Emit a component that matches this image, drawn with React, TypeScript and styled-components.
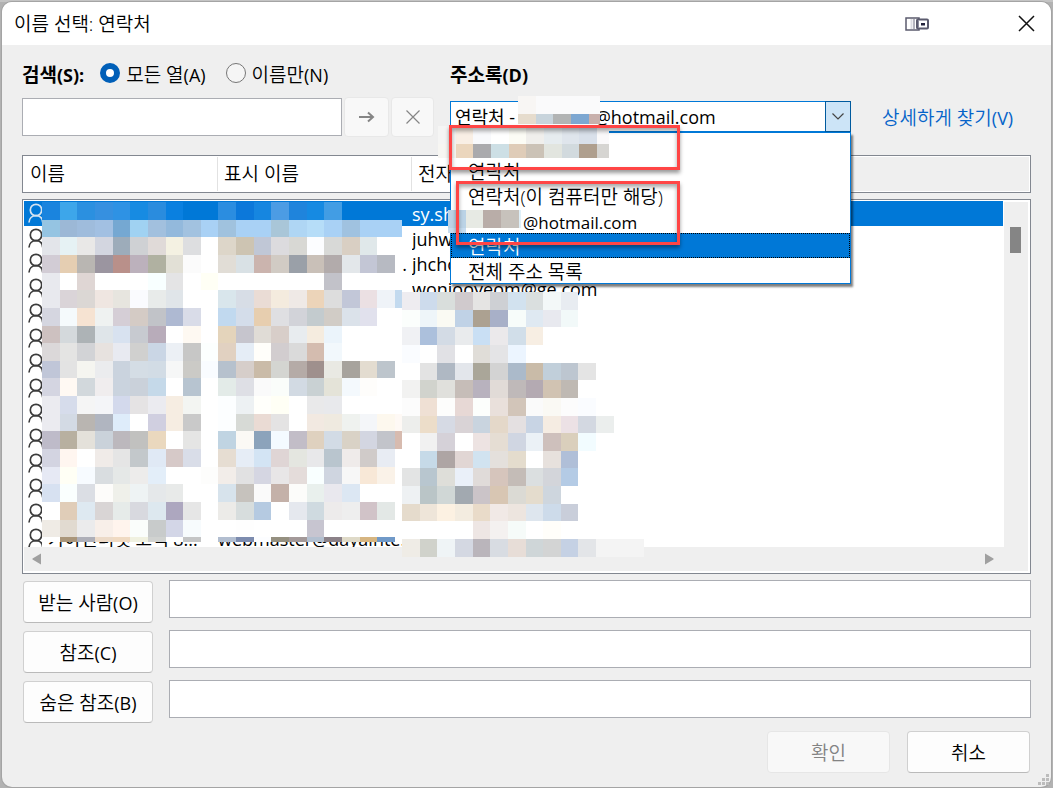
import React from 'react';
import styled, { createGlobalStyle } from 'styled-components';

const GlobalStyle = createGlobalStyle`
  *, *::before, *::after { box-sizing: border-box; }
  body {
    margin: 0;
    background: #b4b4b4;
    font-family: 'Open Sans', 'Noto Sans CJK KR', sans-serif;
    font-size: 19px;
    font-weight: 350;
    color: #000;
  }
  button, input, select { font: inherit; color: inherit; margin: 0; }
`;

const Desktop = styled.div`
  min-height: 100vh;
  padding: 2px 2px 1px;
  display: flex;
  background: linear-gradient(#c4c4c4 0 2px, #b2b2b2 2px);
`;

const Dialog = styled.main`
  flex: 1;
  display: flex;
  flex-direction: column;
  background: #efefef;
  border-radius: 10px;
  box-shadow: 0 0 0 1px #a4a4a4;
`;

const TitleBar = styled.header`
  height: 43px;
  flex: none;
  display: flex;
  align-items: center;
  padding: 0 16px 0 12px;
  background: #fff;
  border-radius: 10px 10px 0 0;
`;

const Title = styled.h1`
  flex: 1;
  margin: 0;
  font-size: 19px;
  font-weight: 350;
  line-height: 26px;
`;

const IconButton = styled.button`
  display: flex;
  padding: 0;
  border: 0;
  background: none;
`;

const DeviceIcon = styled.svg`
  margin-right: 88px;
`;

const Body = styled.div`
  flex: 1;
  display: flex;
  flex-direction: column;
  padding: 14px 20px 14px;
`;

const TopArea = styled.div`
  display: flex;
  gap: 16px;
  margin-bottom: 18px;
`;

const SearchColumn = styled.fieldset`
  width: 412px;
  margin: 0;
  padding: 0;
  border: 0;
`;

const AddressColumn = styled.div`
  flex: 1;
`;

const LabelLine = styled.div`
  display: flex;
  align-items: center;
  height: 30px;
  margin-bottom: 8px;
`;

const Key = styled.span`
  font-size: 18px;
  font-weight: 400;
`;

const Strong = styled.label`
  font-weight: 700;
  margin-right: 16px;
  ${Key} { font-weight: 700; }
`;

const RadioLabel = styled.label`
  display: flex;
  align-items: center;
  gap: 6px;
  margin-right: 20px;
`;

const Radio = styled.input`
  appearance: none;
  width: 20px;
  height: 20px;
  border: 1px solid #767676;
  border-radius: 50%;
  background: #f5f5f5;
  margin-bottom: 2px;
  &:checked {
    border: 6px solid #005fb8;
    background: #fff;
  }
`;

const ControlLine = styled.div`
  display: flex;
  align-items: center;
  height: 40px;
`;

const TextBox = styled.input`
  height: 38px;
  min-width: 0;
  flex: 1;
  border: 1px solid #abadb3;
  border-radius: 0;
  background: #fff;
  padding: 0 6px;
  outline: 0;
`;

const SquareButton = styled.button<{ $width: number }>`
  width: ${(p) => p.$width}px;
  height: 40px;
  margin-left: 2px;
  display: flex;
  align-items: center;
  justify-content: center;
  padding: 0;
  border: 1px solid #e8e8e8;
  border-radius: 4px;
  background: #f8f8f8;
`;

const ComboWrap = styled.div`
  position: relative;
  z-index: 5;
  width: 401px;
  height: 32px;
`;

const Combo = styled.select`
  display: block;
  appearance: none;
  width: 100%;
  height: 31px;
  padding: 0 0 0 4px;
  border: 1px solid #0078d7;
  border-radius: 0;
  background: #fff;
  font-size: 18px;
  font-weight: 400;
  outline: 0;
`;

const ComboArrow = styled.span`
  position: absolute;
  top: 0;
  right: 0;
  width: 26px;
  height: 31px;
  display: flex;
  align-items: center;
  justify-content: center;
  background: #cce4f7;
  border: 1px solid #005a9e;
  pointer-events: none;
`;

const DropList = styled.ul`
  position: absolute;
  top: 31px;
  left: 0;
  width: 100%;
  margin: 0;
  padding: 0;
  list-style: none;
  background: #fff;
  border: 1px solid #0078d7;
  box-shadow: 2px 3px 2px rgba(0, 0, 0, 0.5);
`;

const DropItem = styled.li<{ $account?: boolean; $active?: boolean }>`
  height: 25px;
  line-height: 25px;
  padding-top: 2px;
  padding-left: ${(p) => (p.$account ? 72 : 17)}px;
  font-size: ${(p) => (p.$account ? 17 : 19)}px;
  font-weight: ${(p) => (p.$account ? 400 : 350)};
  color: ${(p) => (p.$active ? '#fff' : '#000')};
  background: ${(p) => (p.$active ? '#0078d7' : 'transparent')};
  outline: ${(p) => (p.$active ? '1px dotted #000' : 'none')};
  outline-offset: -1px;
`;

const Highlight = styled.div<{ $x: number; $y: number; $w: number; $h: number }>`
  position: absolute;
  left: ${(p) => p.$x}px;
  top: ${(p) => p.$y}px;
  width: ${(p) => p.$w}px;
  height: ${(p) => p.$h}px;
  border: 3px solid #ff4545;
  box-shadow: 0 3px 4px rgba(0, 0, 0, 0.4), inset 0 3px 4px rgba(0, 0, 0, 0.35);
  pointer-events: none;
`;

const MosaicSvg = styled.svg<{ $x: number; $y: number }>`
  position: absolute;
  left: ${(p) => p.$x}px;
  top: ${(p) => p.$y}px;
  pointer-events: none;
`;

const FindLink = styled.a`
  margin-left: 31px;
  color: #0563c9;
  text-decoration: none;
`;

const HeaderBox = styled.div`
  height: 38px;
  flex: none;
  padding: 1px;
  border: 1px solid #828790;
  background: #fff;
  margin-bottom: 6px;
`;

const Table = styled.table`
  width: 100%;
  table-layout: fixed;
  border-collapse: separate;
  border-spacing: 0;
`;

const HeadCell = styled.th<{ $width?: number }>`
  width: ${(p) => (p.$width ? `${p.$width}px` : 'auto')};
  height: 34px;
  padding: 0 6px;
  text-align: left;
  font-weight: 350;
  line-height: 26px;
  background: ${(p) => (p.$width ? '#fff' : '#efefef')};
  border-right: ${(p) => (p.$width ? '1px solid #e2e2e2' : '0')};
`;

const ListBox = styled.div`
  position: relative;
  flex: 1 1 0;
  min-height: 240px;
  display: grid;
  grid-template-columns: 1fr 25px;
  grid-template-rows: minmax(0, 1fr) 24px;
  padding: 1px 2px 2px 1px;
  border: 1px solid #828790;
  background: #fff;
`;

const Viewport = styled.div`
  overflow: hidden;
  height: 0;
  min-height: 100%;
  background: #fff;
`;

const Row = styled.tr<{ $selected: boolean }>`
  height: 25px;
  color: ${(p) => (p.$selected ? '#fff' : '#000')};
  background: ${(p) => (p.$selected ? '#0078d7' : '#fff')};
`;

const Cell = styled.td<{ $width?: number; $end?: boolean }>`
  width: ${(p) => (p.$width ? `${p.$width}px` : 'auto')};
  height: 25px;
  padding: 2px ${(p) => (p.$end ? 5 : 0)}px 0 0;
  font-size: 18px;
  font-weight: 400;
  line-height: 23px;
  white-space: nowrap;
  overflow: hidden;
  text-align: ${(p) => (p.$end ? 'right' : 'left')};
`;

const PersonSvg = styled.svg`
  display: block;
`;

const VScroll = styled.div`
  margin: 1px 0 0 1px;
  padding: 25px 6px 0;
  background: #efefef;
`;

const Thumb = styled.div`
  width: 11px;
  height: 26px;
  background: #858585;
`;

const HScroll = styled.div`
  grid-column: 1 / -1;
  display: flex;
  align-items: center;
  justify-content: space-between;
  padding: 0 34px 0 8px;
  background: #efefef;
`;

const Recipients = styled.div`
  display: flex;
  flex-direction: column;
  gap: 7px;
  margin: 6px 0 8px;
`;

const RecipientRow = styled.div`
  display: flex;
  align-items: flex-start;
  height: 43px;
  gap: 16px;
`;

const PushButton = styled.button<{ $width: number }>`
  width: ${(p) => p.$width}px;
  height: 42px;
  padding: 0;
  border: 1px solid #d0d0d0;
  border-bottom-color: #bababa;
  border-radius: 4px;
  background: #fdfdfd;
  &:disabled {
    color: #838383;
    background: #f8f8f8;
    border-color: #e6e6e6;
  }
`;

const RecipientButton = styled(PushButton)`
  margin: 1px 0 0 1px;
`;

const Footer = styled.footer`
  display: flex;
  justify-content: flex-end;
  gap: 17px;
  padding-right: 1px;
`;

const Grip = styled.svg`
  position: fixed;
  right: 4px;
  bottom: 3px;
`;

const PITCH = 17.645;
const step = (i: number) => Math.round(i * PITCH);

function Mosaic({ rows, x, y, width, height }: { rows: string[]; x: number; y: number; width: number; height: number }) {
  return (
    <MosaicSvg $x={x} $y={y} width={width} height={height} shapeRendering="crispEdges" aria-hidden="true">
      {rows.flatMap((row, r) =>
        row.split(' ').map((c, i) => (
          <rect
            key={`${r}-${i}`}
            x={step(i)}
            y={step(r)}
            width={step(i + 1) - step(i)}
            height={step(r + 1) - step(r)}
            fill={`#${c}`}
          />
        )),
      )}
    </MosaicSvg>
  );
}

const NAME_MOSAIC = [
  '1a84de 3da6ea 2b90e0 3690e0 2e92e4 178be2 2a8cde 0a80e0 0078d7 0078d7 2b8de0 0c78da 1686e0 4c9ce4 1f84dc 168ae2 429de4 0078d7 0078d7 0078d7 0078d7',
  '95c4e2 9cb8d6 9fbcdc a2c0e2 75a8d2 a0d2f2 a2c0de 93b9dc a2c2e0 a9d1f5 a0c2de a9d1f5 a9d1f5 a9c6d8 afd6f4 b6ddf8 a9d1f5 a0c2e0 a9d1f5 a9d1f5 a9d1f5',
  'e3e5ea e6f2f4 e9e8e7 d3d6e0 9dacba cfd1d4 e0dad8 f4f1e2 dddee0 fff ddd6c9 cdc4b2 c0c7d6 dcdbde d8d8d4 fcfdff d8d9d7 d9cfc3 e0e8ea fff fff',
  'd2ccd5 e5ceb2 b9b6b2 9b95a0 b9908a bcb1bc b0b1a1 e2e0d6 fbfbfb fff e1ddd6 d9e1e5 cbb4ae d1cbc4 9aa0a8 c9c0b8 b2abab e3e7ea c3c6d5 b7bac2 fff',
  'e8e9ee fff dfd6d4 fff fff fff f8ffff e4e4e5 fff fffff5 fff fff fff fff fff fff c2c2c9 fff fff fff fff',
  'e8e9ee dad4d8 dbd7d4 efe6e1 e7e5df fafbfe e8ebea e0e5e9 fff fff d9e6ec d7dde6 eadcd5 f4ebde efe9e6 ecd4b9 dddddd c2c7d8 ebe0e3 eff3f8 c3daef',
  'd5d6e0 f5fafc f6e3d2 eff2f1 d5ced6 d4cbc5 c1c3c8 aeb9d2 d9dce8 fff c1d9ef d4ddea e7ceaf dfdfe2 d2d3d9 c3cbce d1ccc6 dbe2ea e1e1ed fff fff',
  'cdc1c0 d4d9dc adb3b6 dfe5e9 d8e2f0 c7cad0 b8acba fff fef9f2 fff e4d4bb c6c5cd e0dcd6 d8cec9 e8ecef f5ecdf ebf4fb fff fff fff fff',
  'dbd8d9 e4e4e3 d2d3d6 e7e2df e8eaf1 d0d0cf cad6e5 ecf0f5 c7c7c6 fcfffe e1d1c1 e5edf6 fffefa d2cdcf dadada d4bcaf f2f8fc fff fff fff fff',
  'c0c6d8 e3e3e3 f5f5f0 ebecee cad3de d4dde5 d2dce5 f6f7f7 cbcac6 f9fcff b6c1cd d6ceca cabba8 d4d5d1 b5aba7 9f908d e9e9e3 a7a39d e3dcd0 bdc5cc fff',
  'd4d5e1 fff9f3 d2d8dc f0edee cad3de cad1da c5d9e9 fff b7c4d0 fff e3ebe8 dedfe5 fafafa fafdfa d2dae3 c9d1d3 e4e3d8 f4f9fd fefdfb fff fff',
  'ebebf0 d6dceb f5f5f5 f4f5f8 d3d9ec e5e3e4 ebebf0 f6ede2 f3f5f2 fff fcfeff edf1f3 fffffb fffff5 fff e9e9ea e8e9ec fff fff fff fff',
  'ebebf0 d3dae4 b9b5b1 b0b5c0 deecfa fff d0cfe0 f6ede2 c9c9c9 fff fcfeff d7dad6 eadbd4 e4e3e3 fff f2e9e1 efeae0 eff2ef f4f6f9 fdf8ee fef9f5',
  'bebbc9 b8b0a0 e4e1da cad2da bcb8bd c1c1bf ead8be fff e5e5e4 fff c0d4e2 fbf9f5 8ca3bb f4faff c2bdc7 dfd1bf d2dbe5 d9d2c6 d3d6e1 c2c4ca d7bbaf',
  'd3d4e1 fff6f0 fff f0ebe8 e5e5e5 c3c8cb e0e9f5 d6c9c8 d9dde8 fff e6ddd2 e6edf6 d3e4f4 dfd5d5 e4e6e0 e8e8ea b9c5ce efebea d0cbc9 e8ecf3 fff',
  'e6e9f4 fffff5 f7fbff d9dde0 e5e8e7 edeceb e3eef9 fff fff fdfdfc f2ede9 e1e1e2 d5d6e2 e8e6e7 e4dcda f9ffff cfd5e0 f7f7f7 f8e8d7 faf2e8 fff',
  'd7e1f1 fafffe dbdee4 fdfcfa eff0ea eef3f4 e5e8ea e8eae9 fff fff d7e3ec c6c2bd fafafa c4b1a9 fcfcfa e9f0ed e9e8ee dce7f3 fff fff fff',
  'fff e0cdb8 dee9f1 d9d5d5 e6ebe9 d8d9df dde8ef ada7bf e6e6e6 fff ecebe8 d7dddd b5cae1 fff e5e8ee cfdae0 edebeb eeeeee d1c3c8 e3e8e6 fff',
  'efebe5 e1dad0 ebebec f8efe9 fff4ed fafdfb c8cbcb d3d6e7 f7fbfd fff fff fefefe fff fff fff c7c5d0 fff fff fff fff fff',
  'fff aa967a aeafb8 ecdac8 f0dac2 f0f1e0 d0d2d0 fff c4c5c6 fff b2bed0 7c8bae fcfdff 959080 a39999 b3c0d0 8b8188 dfdac8 d6b581 7099c8 fff',
];

const MAIL_MOSAIC = [
  'eeecf0 cddbec d9dedc d0cacd e5e4e3 ced0d4 d2e2ef dadfdf f3f8f8 e8ecf1',
  'fbfefc eef5f9 fafaf3 c0d2e6 aca191 a8b0c8 f7fcfa dfe9f2 e8e9ef f2f9f9',
  'f0f1f4 acc0dc d3dbe5 e9ebed c9dff4 ebe9eb d1dee9 f7eee3',
  'fafcff fff e1e1e5 fff e0ddd8 e4e4e6 ecf5ff',
  'fff e3e3e3 afb8c3 e3e6eb aaa699 d3d3d3 abbaca c9bba8 c1cfda bdc6d0 e4e4e4',
  'f2f2f1 d1d3cd e0e0dc c6bdb8 b8b2be e1dbd7 bfb9b9 b4aab2 d1c3b2 bfb9b3',
  'fcfcfc efe0d4 fdfdfc e7d8d5 fcfefc e9e0db d2c5b9 fafafa faf9f4 fcfcfc fafcff',
  'edeeec ecddc9 d6dae4 d9d3d6 c9d4df e4d8c9 e4e0e1 c8d4e4 f5ece2 ece1e5 d3d8e1 ebeeed',
  'fff f1f1f1 d5d1d8 fff ede3e2 e5ddd3 d0d6e2 ebf1f6 cec0bc dacfbc f2fcff',
  'fff c6dae8 aea5a4 e1d6d4 d1e3f0 e4e0dc e4dccd fff e7e1dd b0bfd8',
  'e3e4e4 b8c6cf deded9 eaf0f9 e0dbd9 d6c5bc c4bcb7 dbdfe0 d3d5da b4cbe5',
  'eef1f3 bac5c7 d0d7d6 a2a9b0 cbc4c8 d8c6b3 dbdad4 e4dccd ced6de',
  'e5dbcc eee5d9 fcf1e2 f3ece0 e9dbc9 f1e9e6 ede5df dee6ee cddbea c9ceda',
  'fff fff fff fff eee6e4 f4f1f0 f6fbf9 fff fffefa',
  'efece6 d0d2cb eff4f6 d4d8e2 bab5bb d8dce2 e7ddd7 cfd6d8 d3d4d4 c5d1e4 e3e5e8 f4f4f4 f4f4f4 f4f4f4',
];

const COMBO_MOSAIC = [
  'f8f6f4 fafafb fafafb fafafb fafafb',
  'e6dccd c8d4dc b2b4b4 7da7d1 c8b0ac',
];

const ACCOUNT_MOSAIC = [
  'f5f5f4 f9efe5 f8f9fc fff fcfcf5 f0efec e6ecef dfe5ec d9e0ea faf9fa',
  'f7f6f2 ebd6bd aaaaad cddfe5 dfccb8 cbc2b6 e2e5df d2dade af9f8e d6d5d2',
];

const HOTMAIL_MOSAIC = ['bbd3e6 e7eae4 b9ada8 c7c2bc dff0f9', 'c6dcf0'];

type Contact = { name?: string; display?: string; mail?: string };

const CONTACTS: Contact[] = [
  { mail: 'sy.sh' },
  { mail: 'juhwa' },
  { display: '...', mail: 'jhcho' },
  { mail: 'wonjooyeom@ge.com' },
  ...Array.from({ length: 9 }, () => ({})),
  { name: '가야인터넷 고객 8...', display: 'webmaster@dayainte...' },
];

const RECIPIENTS = [
  { id: 'to', text: '받는 사람', key: '(O)' },
  { id: 'cc', text: '참조', key: '(C)' },
  { id: 'bcc', text: '숨은 참조', key: '(B)' },
];

function Person({ selected }: { selected: boolean }) {
  return (
    <PersonSvg width="18" height="23" viewBox="0 0 18 23" fill="none" stroke={selected ? '#d3e2f0' : '#3c3c3c'} strokeWidth="1.700">
      <circle cx="12" cy="7" r="5.700" />
      <path d="M5 19.500C5.200 15.500 8 12.700 12 12.700S18.500 15.500 18.700 19.500" />
    </PersonSvg>
  );
}

export default function App() {
  return (
    <>
      <GlobalStyle />
      <Desktop>
        <Dialog>
          <TitleBar>
            <Title>이름 선택: 연락처</Title>
            <DeviceIcon width="26" height="16" viewBox="0 0 26 16" fill="none" aria-hidden="true">
              <rect x="2" y="2" width="13" height="12" fill="#fff" stroke="#5b5b6e" strokeWidth="1.500" />
              <path d="M7.500 3v10" stroke="#dcdce2" strokeWidth="2" />
              <path d="M10 3v10" stroke="#b4b4be" strokeWidth="2" />
              <rect x="13" y="3.500" width="11" height="9" rx="1" fill="#fff" stroke="#5b5b6e" strokeWidth="2" />
              <path d="M14.500 4v8" stroke="#8b8b9c" />
              <rect x="17" y="7" width="4" height="2.500" fill="#23233c" />
            </DeviceIcon>
            <IconButton type="button" aria-label="닫기">
              <svg width="17" height="17" viewBox="0 0 17 17" stroke="#111" strokeWidth="1.500">
                <path d="M1 1L16 16M16 1L1 16" />
              </svg>
            </IconButton>
          </TitleBar>
          <Body>
            <TopArea>
              <SearchColumn>
                <LabelLine>
                  <Strong htmlFor="search">검색<Key>(S):</Key></Strong>
                  <RadioLabel>
                    <Radio type="radio" name="scope" defaultChecked />
                    <span>모든 열<Key>(A)</Key></span>
                  </RadioLabel>
                  <RadioLabel>
                    <Radio type="radio" name="scope" />
                    <span>이름만<Key>(N)</Key></span>
                  </RadioLabel>
                </LabelLine>
                <ControlLine>
                  <TextBox id="search" type="text" />
                  <SquareButton type="button" $width={45} aria-label="이동" disabled>
                    <svg width="16" height="12" viewBox="0 0 16 12" fill="none" stroke="#858585" strokeWidth="2">
                      <path d="M0 6H14M9 1.500L14 6L9 10.500" />
                    </svg>
                  </SquareButton>
                  <SquareButton type="button" $width={43} aria-label="지우기" disabled>
                    <svg width="14" height="14" viewBox="0 0 14 14" stroke="#858585" strokeWidth="1.200">
                      <path d="M0.500 0.500L13.500 13.500M13.500 0.500L0.500 13.500" />
                    </svg>
                  </SquareButton>
                </ControlLine>
              </SearchColumn>
              <AddressColumn>
                <LabelLine>
                  <Strong htmlFor="book">주소록<Key>(D)</Key></Strong>
                </LabelLine>
                <ControlLine>
                  <ComboWrap>
                    <Combo id="book">
                      <option>{'연락처 -' + '\u00a0'.repeat(17) + '@hotmail.com'}</option>
                    </Combo>
                    <ComboArrow>
                      <svg width="12" height="7" viewBox="0 0 12 7" fill="none" stroke="#444" strokeWidth="1.200">
                        <path d="M0.500 0.500L6 6L11.500 0.500" />
                      </svg>
                    </ComboArrow>
                    <DropList role="listbox" aria-label="주소록">
                      <DropItem role="option" $account />
                      <DropItem role="option">연락처</DropItem>
                      <DropItem role="option">연락처(이 컴퓨터만 해당)</DropItem>
                      <DropItem role="option" $account>@hotmail.com</DropItem>
                      <DropItem role="option" aria-selected="true" $active>연락처</DropItem>
                      <DropItem role="option">전체 주소 목록</DropItem>
                    </DropList>
                    <Mosaic rows={COMBO_MOSAIC} x={68} y={-5} width={82} height={28} />
                    <Mosaic rows={ACCOUNT_MOSAIC} x={-12} y={25} width={171} height={32} />
                    <Mosaic rows={HOTMAIL_MOSAIC} x={-2} y={109} width={73} height={23} />
                    <Highlight $x={-1} $y={24} $w={231} $h={45} />
                    <Highlight $x={6} $y={80} $w={224} $h={64} />
                  </ComboWrap>
                  <FindLink href="#find">상세하게 찾기<Key>(V)</Key></FindLink>
                </ControlLine>
              </AddressColumn>
            </TopArea>

            <HeaderBox>
              <Table>
                <thead>
                  <tr>
                    <HeadCell $width={194}>이름</HeadCell>
                    <HeadCell $width={194}>표시 이름</HeadCell>
                    <HeadCell $width={194}>전자 메일 주소</HeadCell>
                    <HeadCell />
                  </tr>
                </thead>
              </Table>
            </HeaderBox>

            <ListBox>
              <Viewport>
                <Table>
                  <tbody>
                    {CONTACTS.map((c, i) => (
                      <Row key={i} $selected={i === 0}>
                        <Cell $width={24}><Person selected={i === 0} /></Cell>
                        <Cell $width={170}>{c.name}</Cell>
                        <Cell $width={194} $end={c.display === '...'}>{c.display}</Cell>
                        <Cell>{c.mail}</Cell>
                      </Row>
                    ))}
                  </tbody>
                </Table>
              </Viewport>
              <VScroll><Thumb /></VScroll>
              <HScroll>
                <svg width="10" height="12" viewBox="0 0 10 12" fill="#a0a0a0"><path d="M9 0.500V11.500L0.500 6.500V5.500Z" /></svg>
                <svg width="10" height="12" viewBox="0 0 10 12" fill="#a0a0a0"><path d="M1 0.500V11.500L9.500 6.500V5.500Z" /></svg>
              </HScroll>
              <Mosaic rows={NAME_MOSAIC} x={19} y={2} width={360} height={340} />
              <Mosaic rows={MAIL_MOSAIC} x={379} y={92} width={242} height={265} />
            </ListBox>

            <Recipients>
              {RECIPIENTS.map((r) => (
                <RecipientRow key={r.id}>
                  <RecipientButton id={r.id} type="button" $width={130}>{r.text}<Key>{r.key}</Key></RecipientButton>
                  <TextBox type="text" aria-labelledby={r.id} />
                </RecipientRow>
              ))}
            </Recipients>

            <Footer>
              <PushButton type="button" $width={123} disabled>확인</PushButton>
              <PushButton type="button" $width={123}>취소</PushButton>
            </Footer>
          </Body>
        </Dialog>
        <Grip width="11" height="11" viewBox="0 0 11 11" fill="#bcbcbc" aria-hidden="true">
          <path d="M8 0h3v3h-3zM4 4h3v3h-3zM8 4h3v3h-3zM0 8h3v3h-3zM4 8h3v3h-3zM8 8h3v3h-3z" />
        </Grip>
      </Desktop>
    </>
  );
}
